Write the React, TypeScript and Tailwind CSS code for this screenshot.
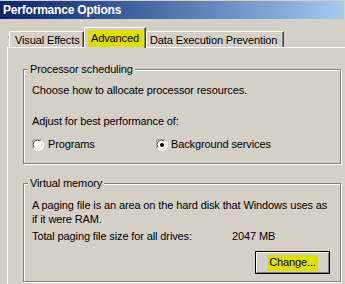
import { ReactNode } from 'react';

const Radio = ({ checked }: { checked?: boolean }) => (
    <svg width="12" height="12" viewBox="0 0 12 12" className="shrink-0">
        <circle cx="6" cy="6" r="5.5" fill="#ffffff" />
        <path d="M1.2 9.2 A5.5 5.5 0 0 1 9.2 1.2" fill="none" stroke="#808080" strokeWidth="1" />
        <path d="M2.1 8.3 A4.4 4.4 0 0 1 8.3 2.1" fill="none" stroke="#404040" strokeWidth="1" />
        <path d="M9.9 2.1 A5.5 5.5 0 0 1 2.1 9.9" fill="none" stroke="#ffffff" strokeWidth="1" />
        <path d="M9.1 2.9 A4.4 4.4 0 0 1 2.9 9.1" fill="none" stroke="#d4d0c8" strokeWidth="1" />
        {checked && <circle cx="6" cy="6" r="2" fill="#000000" />}
    </svg>
);

const GroupBox = ({ title, className = '', children }: { title: string; className?: string; children: ReactNode }) => (
    <div className={`relative w-[318px] border border-[#808080] shadow-[inset_1px_1px_0_#ffffff,1px_1px_0_#ffffff] ${className}`}>
        <span className="absolute -top-[7px] left-[4px] bg-[#d4d0c8] px-[2px] leading-[13px]">{title}</span>
        {children}
    </div>
);

export default function App() {
    return (
        <div className="w-[345px] h-[284px] overflow-hidden bg-[#d4d0c8] text-[11px] leading-[13px] tracking-[-0.12px] text-black font-['Liberation_Sans',Arial,sans-serif]">
            <div className="h-px bg-[#d4d0c8]" />
            <div className="h-[18px] w-[344px] bg-gradient-to-r from-[#0a246a] to-[#a6caf0] flex items-center pl-[3px] text-white font-bold text-[12px] tracking-[-0.2px]">
                Performance Options
            </div>

            <div className="pt-[8px] pl-[7px]">
                <div className="flex items-end h-[20px] pl-[2px]">
                    <div className="h-[16px] w-[75px] border-l border-t border-white border-r border-r-[#404040] shadow-[inset_-1px_0_0_#808080] rounded-tl-[2px] pl-[5px] pt-[2px]">
                        Visual Effects
                    </div>
                    <div className="relative z-10 -mb-px h-[21px] w-[62px] bg-[#d4d0c8] border-l border-t border-white border-r border-r-[#404040] shadow-[inset_-1px_0_0_#808080] rounded-tl-[2px] pl-[3px] pt-[2px]">
                        <div className="h-[17px] w-[55px] bg-[#dede00] flex items-center pl-[3px]">Advanced</div>
                    </div>
                    <div className="h-[16px] w-[138px] border-l border-t border-white border-r border-r-[#404040] shadow-[inset_-1px_0_0_#808080] rounded-tl-[2px] pl-[3px] pt-[2px]">
                        Data Execution Prevention
                    </div>
                </div>

                <div className="w-[360px] h-[260px] border-l border-t border-white pl-[15px] pt-[21px]">
                    <GroupBox title="Processor scheduling" className="h-[95px] pl-[8px] pt-[14px]">
                        <div>Choose how to allocate processor resources.</div>
                        <div className="mt-[18px]">Adjust for best performance of:</div>
                        <div className="mt-[10px] flex items-center h-[13px]">
                            <div className="flex items-center gap-[4px] w-[124px]">
                                <Radio />
                                <span>Programs</span>
                            </div>
                            <div className="flex items-center gap-[3px]">
                                <Radio checked />
                                <span>Background services</span>
                            </div>
                        </div>
                    </GroupBox>

                    <GroupBox title="Virtual memory" className="mt-[19px] h-[99px] pl-[8px] pt-[14px]">
                        <div className="leading-[14px]">
                            A paging file is an area on the hard disk that Windows uses as
                            <br />
                            if it were RAM.
                        </div>
                        <div className="mt-[4px] flex">
                            <span className="w-[200px]">Total paging file size for all drives:</span>
                            <span>2047 MB</span>
                        </div>
                        <div className="mt-[8px] flex justify-end pr-[10px]">
                            <div className="w-[75px] h-[23px] border border-black">
                                <div className="h-full border border-white border-r-[#808080] border-b-[#808080] flex items-center justify-center">
                                    <span className="bg-[#dede00] px-[2px] h-[16px] flex items-center">Change...</span>
                                </div>
                            </div>
                        </div>
                    </GroupBox>
                </div>
            </div>
        </div>
    );
}
